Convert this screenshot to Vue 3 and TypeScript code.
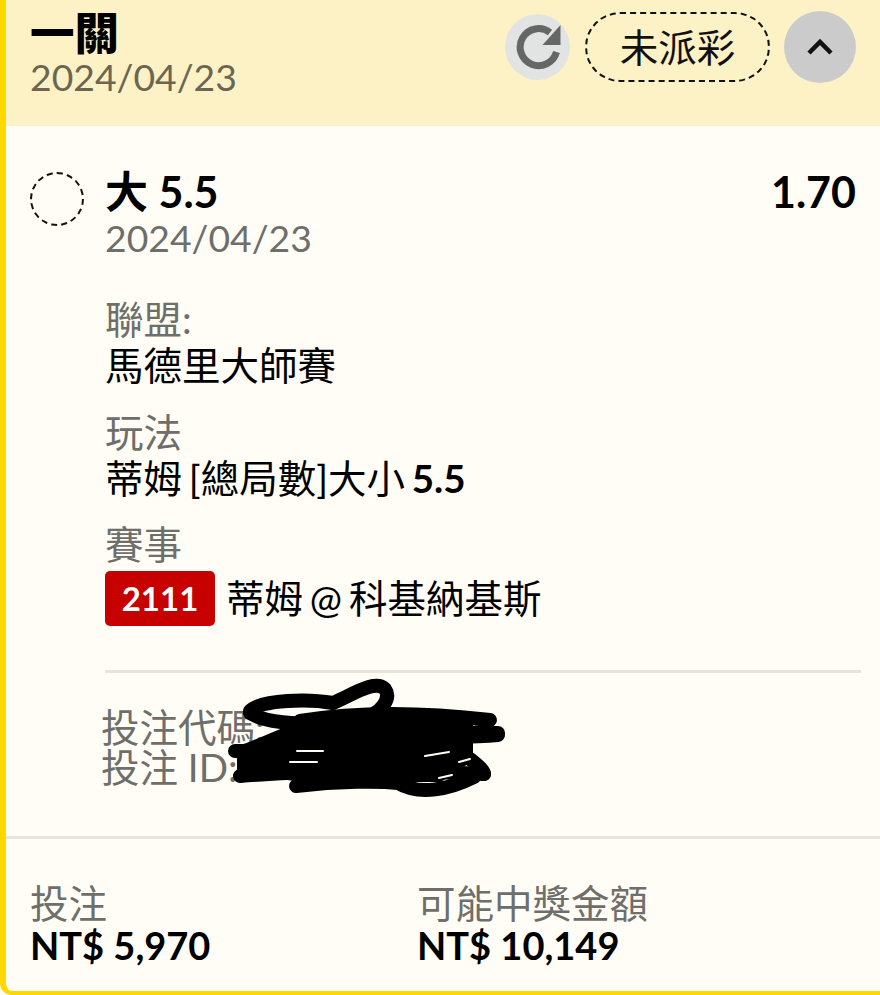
<template>
  <div class="card">
    <header class="card-head">
      <div class="head-text">
        <div class="head-title">一關</div>
        <div class="head-date">2024/04/23</div>
      </div>
      <div class="head-actions">
        <button class="btn-refresh" type="button" aria-label="refresh">
          <svg width="46" height="46" viewBox="0 0 46 46">
            <path d="M41.5 28A18.5 18.5 0 1 1 35 8.5" fill="none" stroke="#666" stroke-width="7" />
            <path d="M45.5 1V21H27.5Z" fill="#666" />
          </svg>
        </button>
        <span class="status">未派彩</span>
        <button class="btn-toggle" type="button" aria-label="collapse">
          <svg width="30" height="20" viewBox="0 0 30 20">
            <path d="M4 16 15 5l11 11" fill="none" stroke="#111" stroke-width="4.5" />
          </svg>
        </button>
      </div>
    </header>

    <section class="bet">
      <div class="bet-top">
        <span class="dot"></span>
        <div class="bet-main">
          <div class="bet-name">大 5.5</div>
          <div class="bet-date">2024/04/23</div>
        </div>
        <div class="odds">1.70</div>
      </div>

      <div class="fields">
        <div v-for="f in fields" :key="f.label" class="field">
          <div class="label">{{ f.label }}</div>
          <div class="value">{{ f.value }} <b v-if="f.line">{{ f.line }}</b></div>
        </div>
        <div class="field">
          <div class="label">賽事</div>
          <div class="value match"><span class="code">2111</span>蒂姆 @ 科基納基斯</div>
        </div>
      </div>

      <div class="ids">
        <div>投注代碼:</div>
        <div>投注 ID:</div>
        <!-- hand scribble hiding the ids, coordinates are page pixels -->
        <svg class="scribble" width="295" height="130" viewBox="220 675 295 130">
          <g fill="none" stroke="#000" stroke-width="14" stroke-linecap="round" stroke-linejoin="round">
            <path d="M250 712C262 700 310 700 333 704 352 696 375 680 385 690 392 700 380 712 372 716" />
            <path d="M250 714C262 722 290 726 335 724" />
            <path d="M300 722C360 712 430 714 490 721" />
            <path d="M292 734H498" />
            <path d="M262 746C320 738 420 742 498 736" />
            <path d="M235 752H300" />
            <path d="M240 777C300 772 380 770 484 775" />
            <path d="M296 787C340 782 380 782 398 784 420 797 450 790 474 778" />
            <path d="M470 760C480 768 484 772 484 775" />
            <path d="M300 725H470V760L440 780H300L240 770V750Z" fill="#000" stroke-width="6" />
          </g>
          <g fill="none" stroke="#fffdf5" stroke-width="2" stroke-linecap="round">
            <path d="M297 752H323M290 763H317M425 757 449 753M459 763 470 760M439 779 452 776" />
          </g>
        </svg>
      </div>
    </section>

    <footer class="totals">
      <div class="total">
        <div class="label">投注</div>
        <div class="amount">NT$ 5,970</div>
      </div>
      <div class="total">
        <div class="label">可能中獎金額</div>
        <div class="amount">NT$ 10,149</div>
      </div>
    </footer>
  </div>
</template>

<script setup lang="ts">
const fields: { label: string; value: string; line?: string }[] = [
  { label: '聯盟:', value: '馬德里大師賽' },
  { label: '玩法', value: '蒂姆 [總局數]大小', line: '5.5' },
];
</script>

<style>
html, body { background: #fffdf5; }
</style>

<style scoped>
.card {
  box-sizing: border-box; width: 880px; height: 995px;
  display: flex; flex-direction: column;
  background: #fffdf5;
  border-left: 6px solid #ffd800; border-bottom: 4px solid #ffd800;
  border-bottom-left-radius: 12px;
  font-family: Lato, "Noto Sans CJK TC", sans-serif;
  font-size: 38.5px; line-height: 46px; color: #000;
  overflow: hidden;
}
.card-head {
  height: 126px; flex: none; box-sizing: border-box;
  display: flex; justify-content: space-between; align-items: flex-start;
  padding: 11px 24px 0 24px;
  background: #fdf2c5;
}
.head-title { font-size: 44.5px; font-weight: 900; line-height: 44px; }
.head-date { color: #6b6552; font-size: 37.3px; line-height: 44px; }
.head-actions { display: flex; align-items: center; gap: 14px; }
.btn-refresh, .btn-toggle {
  display: flex; align-items: center; justify-content: center;
  padding: 0; border: 0; border-radius: 50%;
}
.btn-refresh { width: 65px; height: 66px; background: #e2e4e4; margin-right: 1px; }
.btn-toggle { width: 72px; height: 72px; background: #cbcbcb; }
.status {
  box-sizing: border-box; width: 185px; height: 70px;
  display: flex; align-items: center; justify-content: center;
  border: 2px dashed #111; border-radius: 35px;
  color: #111;
}
.bet { flex: 1; position: relative; padding: 43px 24px 0; }
.bet-top { display: flex; align-items: flex-start; }
.dot {
  box-sizing: border-box; width: 54px; height: 54px; margin-top: 3px; margin-right: 21px;
  border: 2px dashed #111; border-radius: 50%; flex: none;
}
.bet-main { flex: 1; }
.bet-name, .odds { font-size: 43px; font-weight: 700; }
.bet-date { color: #6e6e6a; font-size: 37.3px; }
.fields { margin: 35px 0 0 75px; display: flex; flex-direction: column; gap: 20.5px; }
.label { color: #6e6e6a; }
.value { word-spacing: -3px; }
.value b { font-weight: 700; }
.match { display: flex; align-items: center; gap: 11px; margin-top: 3px; height: 56px; }
.code {
  width: 110px; height: 55px; box-sizing: border-box;
  display: flex; align-items: center; justify-content: center;
  background: #c70000; border-radius: 5px;
  color: #fff; font-size: 33px; font-weight: 700;
}
.ids {
  position: relative;
  margin: 44px -5px 0 75px; padding: 34px 0 0;
  border-top: 3px solid #e6e4dd;
  color: #6e6e6a; line-height: 40px;
  text-indent: -4px;
}
.scribble { position: absolute; left: 115px; top: 1px; }
.totals {
  flex: none; height: 155px; box-sizing: border-box;
  display: grid; grid-template-columns: 387px 1fr;
  padding: 43px 24px 0;
  border-top: 3px solid #e6e4dd;
}
.total .label { line-height: 42px; }
.amount { font-size: 38px; font-weight: 700; line-height: 40px; margin-top: 1px; }
</style>
